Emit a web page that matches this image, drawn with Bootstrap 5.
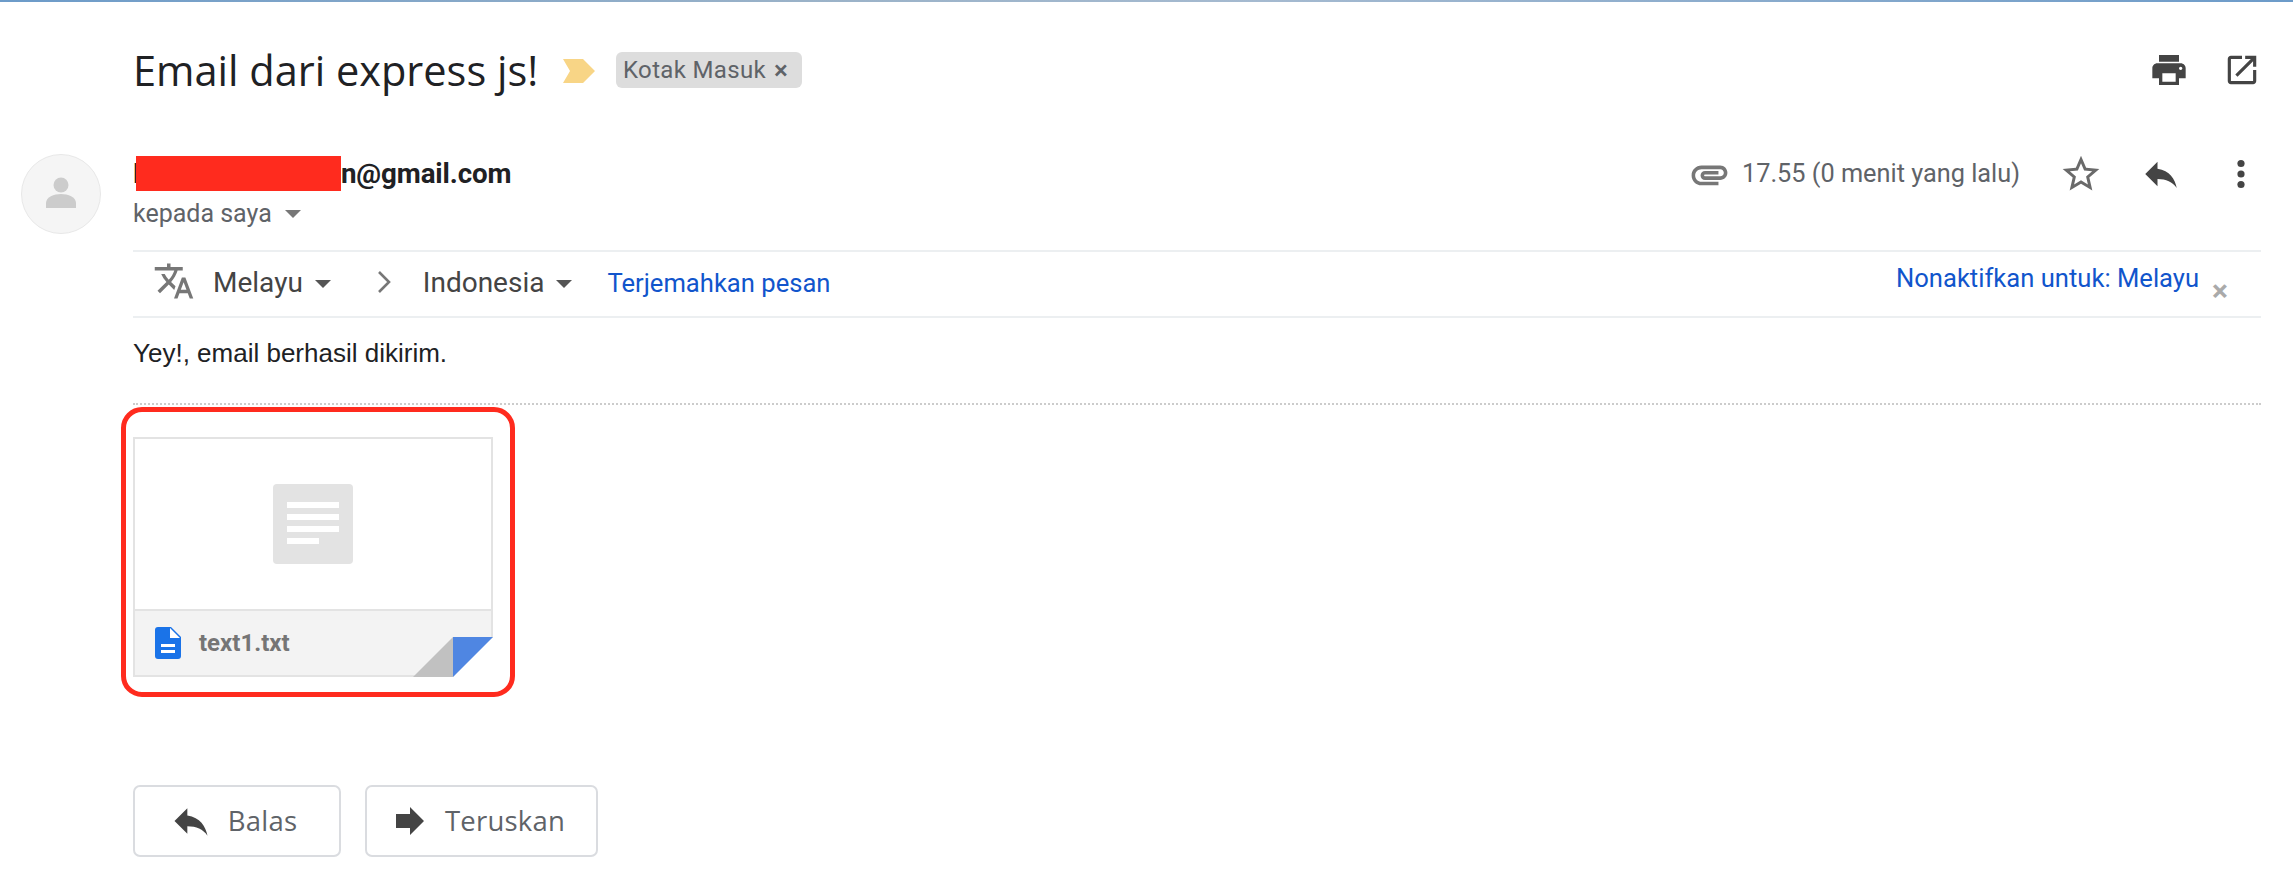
<!doctype html>
<html lang="id">
<head>
<meta charset="utf-8">
<title>Email dari express js!</title>
<link href="https://cdn.jsdelivr.net/npm/bootstrap@5.3.0/dist/css/bootstrap.min.css" rel="stylesheet">
<style>
body{background:#fff;font-family:Roboto,sans-serif;color:#202124;overflow:hidden}
.topline{height:2px;background:linear-gradient(90deg,#6c9bc9,#9ab2c8 35%,#a5bad0 55%,#6c9bc9 100%)}
.subject-row{padding:50px 32px 0 133px;height:88px}
.subject{font-family:"Open Sans",Roboto,sans-serif;font-size:41.5px;line-height:36px;font-weight:400;letter-spacing:0;margin:0;color:#202124;width:430px;white-space:nowrap}
.tag-mark{width:32px;height:24px;margin-right:21px}
.chip{height:36px;width:186px;background:#ddd;border-radius:6px;color:#5f6368;font-size:24px;padding-left:7px;letter-spacing:.35px}
.chip-x{margin-left:8px;font-size:26px;font-weight:500}
.msg{padding:64px 32px 0 21px;gap:32px}
.avatar{width:80px;height:80px;border-radius:50%;background:#f5f5f5;border:1px solid #e8e8e8}
.sender-row{height:40px}
.sender{font-size:27.7px;font-weight:700;line-height:40px;color:#202124;letter-spacing:-.1px}
.redact{display:inline-block;width:205px;height:35px;background:#ff2b1e;vertical-align:-8px;margin-left:-15px;position:relative}
.meta-time{font-size:25.3px;color:#5f6368;line-height:40px}
.clip{width:43px;height:43px;margin-right:11px}
.to-row{height:36px;margin-top:2px;color:#5f6368;font-size:25px;line-height:36px}
.caret-d{display:inline-block;border:8px solid transparent;border-top-color:#777;border-bottom:0;margin-left:13px;vertical-align:4px}
.translate{border-top:2px solid #eceff1;border-bottom:2px solid #eceff1;height:68px;margin-top:18px;padding-left:20px}
.lang{font-size:28px;color:#444;line-height:62px}
.lang-caret{display:inline-block;border:8px solid transparent;border-top-color:#555;border-bottom:0;vertical-align:5px}
.blue-link{color:#1155cc;text-decoration:none;font-size:25.6px}
.close-x{color:#aaa;font-size:30px;font-weight:700;line-height:1}
.body-text{font-family:"Liberation Sans",Arial,sans-serif;font-size:26px;color:#202124;line-height:34px;margin-top:18px;height:67px}
.dots{border-top:2px dotted #ccc;margin-bottom:2px}
.redbox{width:394px;height:290px;border:5px solid #ff2b1e;border-radius:21px;margin-left:-12px;padding:25px 17px 15px 7px}
.attach{position:relative;width:360px;height:240px;border:2px solid #e3e3e3;background:#fff}
.attach-top{height:170px}
.attach-foot{height:66px;background:#f3f3f3;border-top:2px solid #e3e3e3;padding-left:20px;margin-top:0}
.fname{font-size:24px;font-weight:700;color:#757575;margin-left:18px}
.fold{position:absolute;right:-2px;bottom:-2px;width:80px;height:40px;display:block}
.reply-row{margin-top:88px;gap:24px}
.act-btn{height:72px;border:2px solid #dadce0;border-radius:7px;background:#fff;color:#5f6368;font-family:"Open Sans",Roboto,sans-serif;font-size:27.5px;padding:0;letter-spacing:.2px}
.act-reply{width:208px;gap:15px;padding-right:8px}
.act-fwd{width:233px;gap:21px;padding-right:2px}
</style>
</head>
<body>
<div class="topline"></div>
<div class="subject-row d-flex align-items-start">
  <h1 class="subject">Email dari express js!</h1>
  <svg class="tag-mark align-self-center mt-0" viewBox="0 0 32 24"><path fill="#f8d586" d="M0 0h20l12 12-12 12H0l7-12z"/></svg>
  <span class="chip d-flex align-items-center">Kotak Masuk<span class="chip-x">×</span></span>
  <div class="ms-auto d-flex align-items-center" style="height:36px;gap:34px">
    <svg width="40" height="40" viewBox="0 0 24 24" fill="#444"><path d="M19 8H5c-1.66 0-3 1.34-3 3v6h4v4h12v-4h4v-6c0-1.66-1.34-3-3-3zm-3 11H8v-5h8v5zm3-7c-.55 0-1-.45-1-1s.45-1 1-1 1 .45 1 1-.45 1-1 1zm-1-9H6v4h12V3z"/></svg>
    <svg width="38" height="38" viewBox="0 0 24 24" fill="#444"><path d="M19 19H5V5h7V3H5c-1.11 0-2 .9-2 2v14c0 1.1.89 2 2 2h14c1.1 0 2-.9 2-2v-7h-2v7zM14 3v2h3.59l-9.83 9.83 1.41 1.41L19 6.41V10h2V3h-7z"/></svg>
  </div>
</div>
<div class="msg d-flex align-items-start">
  <div class="avatar flex-shrink-0 d-flex align-items-center justify-content-center">
    <svg width="36" height="36" viewBox="0 0 36 36" fill="#ccc"><ellipse cx="18" cy="9" rx="7.5" ry="7.5"/><path d="M3 32v-5c0-6 8-9 15-9s15 3 15 9v5z"/></svg>
  </div>
  <div class="flex-grow-1">
    <div class="sender-row d-flex align-items-center">
      <span class="sender">D<span class="redact"></span>n@gmail.com</span>
      <div class="ms-auto d-flex align-items-center">
        <svg class="clip" viewBox="0 0 24 24" fill="#777"><path d="M2 12.5C2 9.46 4.46 7 7.5 7H18c2.21 0 4 1.79 4 4s-1.79 4-4 4H9.5C8.12 15 7 13.88 7 12.5S8.12 10 9.5 10H17v2H9.41c-.55 0-.55 1 0 1H18c1.1 0 2-.9 2-2s-.9-2-2-2H7.5C5.57 9 4 10.57 4 12.5S5.57 16 7.5 16H17v2H7.5C4.46 18 2 15.54 2 12.5z"/></svg>
        <span class="meta-time">17.55 (0 menit yang lalu)</span>
        <svg style="margin-left:39px" width="44" height="44" viewBox="0 0 24 24" fill="#6a6a6a"><path d="M22 9.24l-7.19-.62L12 2 9.19 8.63 2 9.24l5.46 4.73L5.82 21 12 17.27 18.18 21l-1.63-7.03L22 9.24zM12 15.4l-3.76 2.27 1-4.28-3.32-2.88 4.38-.38L12 6.1l1.71 4.04 4.38.38-3.32 2.88 1 4.28L12 15.4z"/></svg>
        <svg style="margin-left:37px" width="42" height="42" viewBox="0 0 24 24" fill="#444"><path d="M10 9V5l-7 7 7 7v-4.1c5 0 8.5 1.6 11 5.1-1-5-4-10-11-11z"/></svg>
        <svg style="margin-left:41px;margin-right:2px" width="36" height="36" viewBox="0 0 24 24" fill="#444"><circle cx="12" cy="5" r="2.4"/><circle cx="12" cy="12" r="2.4"/><circle cx="12" cy="19" r="2.4"/></svg>
      </div>
    </div>
    <div class="to-row">kepada saya<span class="caret-d"></span></div>
    <div class="translate d-flex align-items-start">
      <svg class="mt-2" width="42" height="42" viewBox="0 0 24 24" fill="#777"><path d="M12.87 15.07l-2.54-2.51.03-.03c1.74-1.94 2.98-4.17 3.71-6.53H17V4h-7V2H8v2H1v1.99h11.17C11.5 7.92 10.44 9.75 9 11.35 8.07 10.32 7.3 9.19 6.69 8h-2c.73 1.63 1.73 3.17 2.98 4.56l-5.09 5.02L4 19l5-5 3.11 3.11.76-2.04zM18.5 10h-2L12 22h2l1.12-3h4.75L21 22h2l-4.5-12zm-2.62 7l1.62-4.33L19.12 17h-3.24z"/></svg>
      <span class="lang" style="margin-left:18px">Melayu</span>
      <span class="lang-caret" style="margin:28px 0 0 12px"></span>
      <svg style="margin:19px 32px 0 46px" width="14" height="22" viewBox="0 0 14 22" fill="none" stroke="#777" stroke-width="2.6"><path d="M2 1l10 10L2 21"/></svg>
      <span class="lang">Indonesia</span>
      <span class="lang-caret" style="margin:28px 0 0 12px"></span>
      <a class="blue-link" style="line-height:62px;margin-left:35px" href="#">Terjemahkan pesan</a>
      <a class="blue-link ms-auto" style="line-height:52px" href="#">Nonaktifkan untuk: Melayu</a>
      <span class="close-x" style="margin:24px 33px 0 13px">×</span>
    </div>
    <div class="body-text">Yey!, email berhasil dikirim.</div>
    <div class="dots"></div>
    <div class="redbox">
      <div class="attach">
        <div class="attach-top d-flex align-items-center justify-content-center">
          <svg width="80" height="80" viewBox="0 0 80 80" class="mt-0"><rect width="80" height="80" rx="4" fill="#e3e3e3"/><path fill="#fff" d="M14 18h52v6H14zM14 30h52v6H14zM14 42h52v6H14zM14 54h32v6H14z"/></svg>
        </div>
        <div class="attach-foot d-flex align-items-center">
          <svg width="26" height="32" viewBox="0 0 26 32"><path fill="#1a73e8" d="M3 0h13l10 10v19a3 3 0 0 1-3 3H3a3 3 0 0 1-3-3V3a3 3 0 0 1 3-3z"/><path fill="#fff" d="M15 1v10h10zM6 17h14v3H6zM6 23h14v3H6z"/></svg>
          <span class="fname">text1.txt</span>
        </div>
        <svg class="fold" viewBox="0 0 80 40"><path fill="#fff" d="M80 0v40H40z"/><path fill="#c1c1c1" d="M0 40L40 0v40z"/><path fill="#4f86e2" d="M40 0h40L40 40z"/></svg>
      </div>
    </div>
    <div class="reply-row d-flex">
      <button class="btn act-btn act-reply d-flex align-items-center justify-content-center"><svg width="44" height="44" viewBox="0 0 24 24" fill="#444"><path d="M10 9V5l-7 7 7 7v-4.1c5 0 8.5 1.6 11 5.1-1-5-4-10-11-11z"/></svg>Balas</button>
      <button class="btn act-btn act-fwd d-flex align-items-center justify-content-center"><svg width="28" height="28" viewBox="0 0 28 28" fill="#444"><path d="M0 7h14V0l14 14-14 14v-7H0z"/></svg>Teruskan</button>
    </div>
  </div>
</div>
<script src="https://cdn.jsdelivr.net/npm/bootstrap@5.3.0/dist/js/bootstrap.bundle.min.js"></script>
</body>
</html>
